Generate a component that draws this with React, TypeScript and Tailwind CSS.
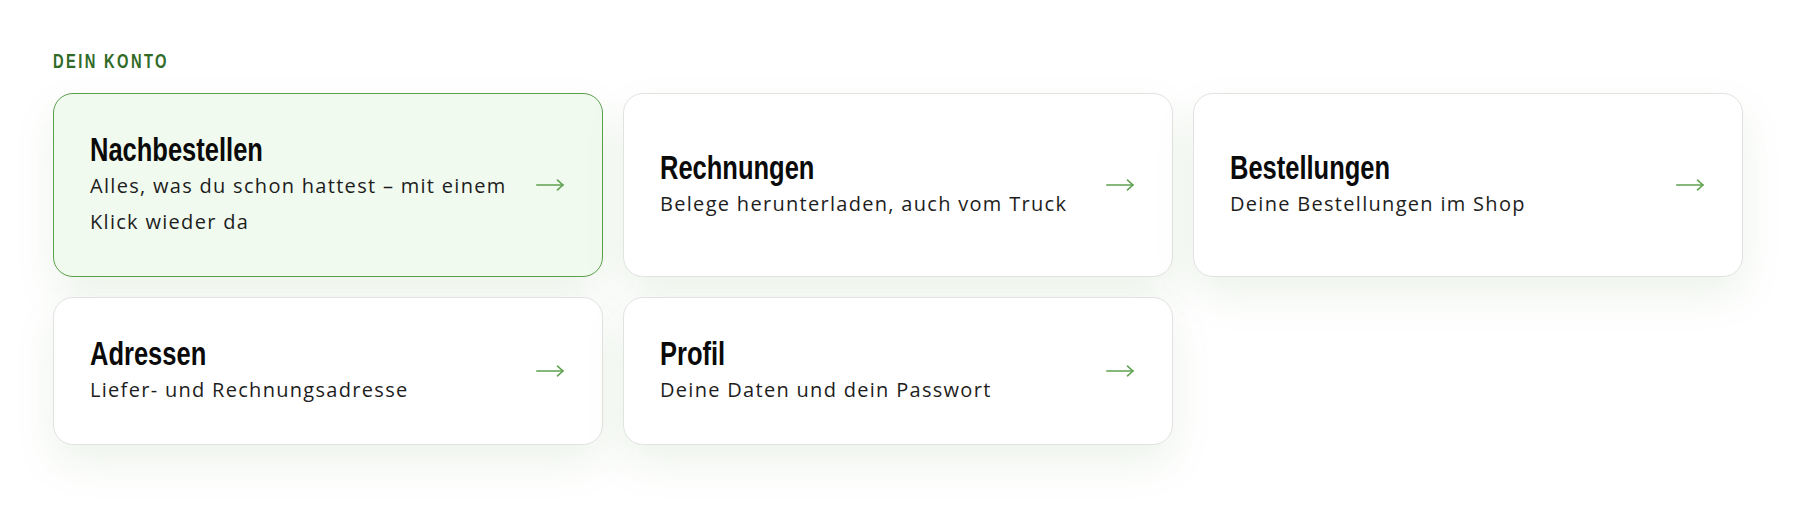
import React from "react";

type Entry = {
  title: string;
  text: string;
  active?: boolean;
};

const entries: Entry[] = [
  {
    title: "Nachbestellen",
    text: "Alles, was du schon hattest – mit einem Klick wieder da",
    active: true,
  },
  { title: "Rechnungen", text: "Belege herunterladen, auch vom Truck" },
  { title: "Bestellungen", text: "Deine Bestellungen im Shop" },
  { title: "Adressen", text: "Liefer- und Rechnungsadresse" },
  { title: "Profil", text: "Deine Daten und dein Passwort" },
];

function ArrowRight() {
  return (
    <svg
      width="28"
      height="12"
      viewBox="0 0 28 12"
      fill="none"
      stroke="#5ea14f"
      strokeWidth="1.6"
      strokeLinecap="round"
      strokeLinejoin="round"
      className="shrink-0"
    >
      <path d="M0.8 6H27" />
      <path d="M21.5 1.2L27 6L21.5 10.8" />
    </svg>
  );
}

function AccountCard({ title, text, active }: Entry) {
  return (
    <a
      href="#"
      className={
        "flex items-center rounded-[20px] border-[1.5px] py-[36px] pl-9 pr-[38px] shadow-[0_18px_40px_rgba(80,140,60,0.10)] " +
        (active ? "border-[#5a9f4a] bg-[#f1faef]" : "border-[#e2e2e2] bg-white")
      }
    >
      <div className="min-w-0 flex-1">
        {/* condensed display face: narrowed Liberation Sans Bold */}
        <h3 className="origin-left scale-x-[0.75] font-['Liberation_Sans',Arial,sans-serif] text-[34px] font-bold leading-[38px] text-[#0a0a0a]">
          {title}
        </h3>
        <p className="font-['Open_Sans',sans-serif] text-[20px] leading-[36px] tracking-[0.065em] text-[#1d1d1d]">
          {text}
        </p>
      </div>
      <div className="ml-6">
        <ArrowRight />
      </div>
    </a>
  );
}

export default function App() {
  return (
    <div className="min-h-[522px] bg-white pt-[49px]">
      <section className="ml-[53px] w-[1690px]">
        <h2 className="mb-[20px] origin-left scale-x-[0.7] font-['Liberation_Sans',Arial,sans-serif] text-[21px] font-bold uppercase leading-6 tracking-[3.4px] text-[#2f6b27]">
          Dein Konto
        </h2>
        <div className="grid grid-cols-3 gap-5">
          {entries.map((e) => (
            <AccountCard key={e.title} {...e} />
          ))}
        </div>
      </section>
    </div>
  );
}
